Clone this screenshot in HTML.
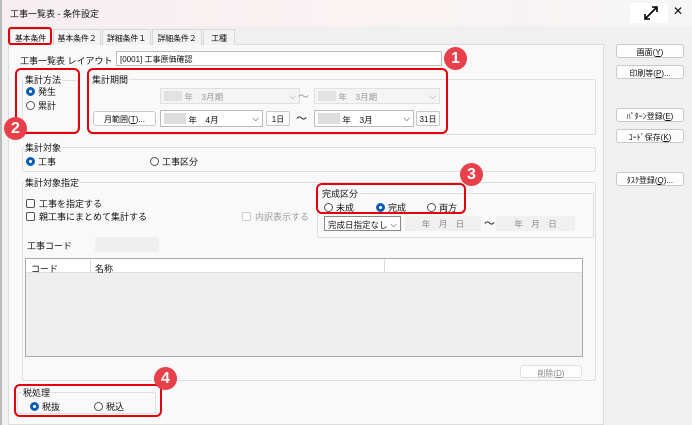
<!DOCTYPE html>
<html><head><meta charset="utf-8"><style>
*{box-sizing:border-box;margin:0;padding:0}
body{width:692px;height:425px;overflow:hidden;background:#f0f0f0;font-family:"Liberation Sans","Noto Sans CJK JP",sans-serif;font-size:9px;color:#111;position:relative}
.a{position:absolute;white-space:nowrap}
.title{left:0;top:0;width:692px;height:26px;background:linear-gradient(90deg,#f6eef0,#fbf3f4 50%,#f6f6f6);border-left:2px solid #bbb}
.panel{left:8px;top:44px;width:596px;height:381px;background:#f9f9f9;border:1px solid #dcdcdc}
.tab{top:29px;height:16px;border:1px solid #d8d8d8;border-bottom:none;background:#f3f3f3;padding:3px 0 0;font-size:8px;text-align:center;letter-spacing:-0.2px}
.grp{border:1px solid #dedede;border-radius:2px}
.lbl{font-size:9px;background:#f9f9f9;padding:0 1px}
.in{background:#fff;border:1px solid #bbb;height:15px;padding:2px 3px;font-size:8.5px}
.dis{background:#f4f4f4;border:1px solid #e0e0e0;color:#999}
.btn{background:#fdfdfd;border:1px solid #c8c8c8;border-radius:3px;text-align:center;font-size:8px;padding-top:2px;height:14px}
.red{border:2.5px solid #e4000f;border-radius:6px}
.badge{width:23px;height:23px;border-radius:50%;background:#e8404a;color:#fff;font-size:16px;text-align:center;line-height:23px;font-weight:bold}
.rad{display:inline-block;width:9px;height:9px;border-radius:50%;border:1px solid #555;vertical-align:-1px;margin-right:3px;background:#fff}
.rad.on{border:3px solid #0a5fb4}
.chk{display:inline-block;width:9px;height:9px;border:1px solid #555;border-radius:2px;vertical-align:-1px;margin-right:4px;background:#fff}
</style></head><body>
<div class="a" style="left:0;top:0;width:2px;height:425px;background:#bbb"></div>
<div class="a title"></div>
<div class="a" style="left:10px;top:7px;font-size:9px">工事一覧表 - 条件設定</div>
<div class="a" style="left:630px;top:3px;width:38px;height:20px;background:#fff"></div>
<svg class="a" style="left:643px;top:5px" width="16" height="16" viewBox="0 0 16 16"><path d="M2 14L14 2M9 2h5v5M2 9v5h5" stroke="#000" stroke-width="1.6" fill="none"/></svg>
<div class="a" style="left:673px;top:4px;font-size:12px">✕</div>

<div class="a panel"></div>
<div class="a tab" style="left:10px;background:#f9f9f9;height:17px;width:41px">基本条件</div>
<div class="a tab" style="left:53px;width:48px">基本条件２</div>
<div class="a tab" style="left:102px;width:49px">詳細条件１</div>
<div class="a tab" style="left:152px;width:50px">詳細条件２</div>
<div class="a tab" style="left:203px;width:32px">工種</div>
<div class="a red" style="left:8px;top:27px;width:44px;height:18px;border-radius:3px"></div>

<div class="a" style="left:20px;top:54px;font-size:9px">工事一覧表 レイアウト</div>
<div class="a in" style="left:116px;top:51px;width:326px;height:15px;font-size:8px">[0001] 工事原価確認</div>

<!-- 集計方法 -->
<div class="a grp" style="left:22px;top:80px;width:56px;height:52px"></div>
<div class="a lbl" style="left:24px;top:73px">集計方法</div>
<div class="a" style="left:26px;top:85px"><span class="rad on"></span>発生</div>
<div class="a" style="left:26px;top:99px"><span class="rad"></span>累計</div>

<!-- 集計期間 -->
<div class="a grp" style="left:88px;top:79px;width:508px;height:56px"></div>
<div class="a lbl" style="left:91px;top:73px">集計期間</div>
<div class="a in dis" style="left:160px;top:88px;width:140px;height:16px"><span style="display:inline-block;width:18px;height:10px;vertical-align:-1px;background:#e2e2e2"></span> 年　3月期<span style="float:right">⌵</span></div>
<div class="a" style="left:298px;top:88px;color:#999;font-size:11px">～</div>
<div class="a in dis" style="left:314px;top:88px;width:126px;height:16px"><span style="display:inline-block;width:18px;height:10px;vertical-align:-1px;background:#e2e2e2"></span> 年　3月期<span style="float:right">⌵</span></div>
<div class="a btn" style="left:93px;top:111px;width:63px;height:15px">月範囲(<u>T</u>)...</div>
<div class="a in" style="left:160px;top:110px;width:103px;height:17px"><span style="display:inline-block;width:22px;height:11px;vertical-align:-1px;background:#ddd"></span> 年　4月<span style="float:right">⌵</span></div>
<div class="a btn" style="left:266px;top:111px;width:24px;height:15px;border-radius:2px">1日</div>
<div class="a" style="left:296px;top:110px;font-size:11px">～</div>
<div class="a in" style="left:314px;top:110px;width:100px;height:17px"><span style="display:inline-block;width:22px;height:11px;vertical-align:-1px;background:#ddd"></span> 年　3月<span style="float:right">⌵</span></div>
<div class="a btn" style="left:416px;top:111px;width:24px;height:15px;border-radius:2px">31日</div>

<div class="a red" style="left:15px;top:68px;width:65px;height:66px"></div>
<div class="a red" style="left:87px;top:68px;width:361px;height:66px"></div>

<!-- right buttons -->
<div class="a btn" style="left:616px;top:44px;width:68px">画面(<u>Y</u>)</div>
<div class="a btn" style="left:616px;top:65px;width:68px">印刷等(<u>P</u>)...</div>
<div class="a btn" style="left:616px;top:108px;width:68px">ﾊﾟﾀｰﾝ登録(<u>E</u>)</div>
<div class="a btn" style="left:616px;top:129px;width:68px">ｺｰﾄﾞ保存(<u>K</u>)</div>
<div class="a btn" style="left:616px;top:172px;width:68px">ﾀｽｸ登録(<u>Q</u>)...</div>

<!-- 集計対象 -->
<div class="a grp" style="left:22px;top:147px;width:574px;height:25px"></div>
<div class="a lbl" style="left:24px;top:141px">集計対象</div>
<div class="a" style="left:26px;top:155px"><span class="rad on"></span>工事</div>
<div class="a" style="left:150px;top:155px"><span class="rad"></span>工事区分</div>

<!-- 集計対象指定 -->
<div class="a grp" style="left:22px;top:182px;width:574px;height:199px"></div>
<div class="a lbl" style="left:24px;top:176px">集計対象指定</div>
<div class="a" style="left:26px;top:197px"><span class="chk"></span>工事を指定する</div>
<div class="a" style="left:26px;top:210px"><span class="chk"></span>親工事にまとめて集計する</div>
<div class="a" style="left:242px;top:210px;color:#999"><span class="chk" style="border-color:#ccc"></span>内訳表示する</div>

<div class="a grp" style="left:317px;top:193px;width:277px;height:45px"></div>
<div class="a lbl" style="left:321px;top:187px">完成区分</div>
<div class="a" style="left:324px;top:201px"><span class="rad"></span>未成</div>
<div class="a" style="left:376px;top:201px"><span class="rad on"></span>完成</div>
<div class="a" style="left:427px;top:201px"><span class="rad"></span>両方</div>
<div class="a in" style="left:324px;top:216px;width:77px;height:15px;border-color:#888">完成日指定なし<span style="float:right">⌵</span></div>
<div class="a" style="left:405px;top:216px;width:76px;height:15px;background:#f0f0f0;color:#888;text-align:center;font-size:8.5px;padding-top:2px">年　月　日</div>
<div class="a" style="left:484px;top:215px;font-size:11px">～</div>
<div class="a" style="left:496px;top:216px;width:79px;height:15px;background:#f0f0f0;color:#888;text-align:center;font-size:8.5px;padding-top:2px">年　月　日</div>
<div class="a red" style="left:316px;top:183px;width:150px;height:31px"></div>

<div class="a" style="left:27px;top:239px;font-size:9px">工事コード</div>
<div class="a" style="left:95px;top:237px;width:64px;height:15px;background:#efefef;border-radius:2px"></div>

<div class="a" style="left:25px;top:258px;width:558px;height:99px;background:#efefef;border:1px solid #aaa"></div>
<div class="a" style="left:26px;top:259px;width:556px;height:14px;background:#fff;border-bottom:1px solid #ddd"></div>
<div class="a" style="left:90px;top:259px;width:1px;height:14px;background:#ddd"></div>
<div class="a" style="left:384px;top:259px;width:1px;height:14px;background:#ddd"></div>
<div class="a" style="left:31px;top:262px;font-size:9px">コード</div>
<div class="a" style="left:95px;top:262px;font-size:9px">名称</div>
<div class="a btn" style="left:520px;top:365px;width:62px;height:13px;color:#888;border-color:#e0e0e0">削除(<u>D</u>)</div>

<!-- 税処理 -->
<div class="a grp" style="left:17px;top:392px;width:139px;height:22px"></div>
<div class="a lbl" style="left:22px;top:386px">税処理</div>
<div class="a" style="left:30px;top:400px"><span class="rad on"></span>税抜</div>
<div class="a" style="left:94px;top:400px"><span class="rad"></span>税込</div>
<div class="a red" style="left:14px;top:384px;width:148px;height:33px"></div>

<div class="a badge" style="left:444px;top:47px">1</div>
<div class="a badge" style="left:4px;top:117px">2</div>
<div class="a badge" style="left:460px;top:163px">3</div>
<div class="a badge" style="left:154px;top:367px">4</div>
</body></html>
